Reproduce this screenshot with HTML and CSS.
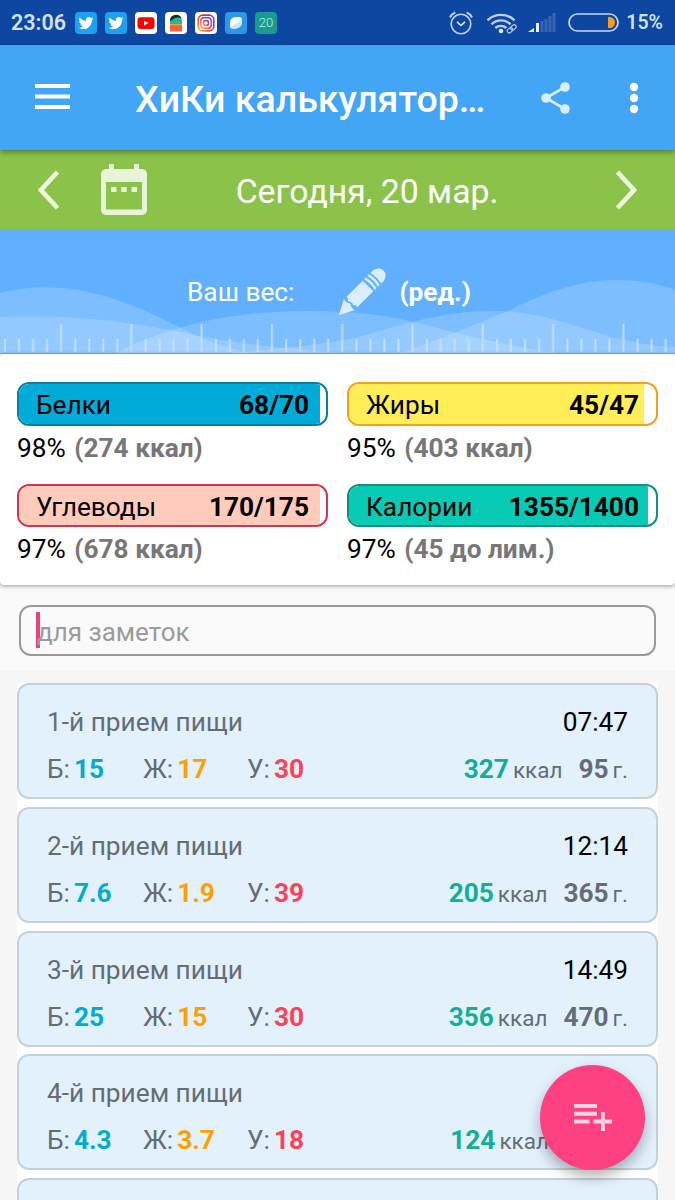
FILE: index.html
```html
<!DOCTYPE html>
<html lang="ru">
<head>
  <meta charset="UTF-8">
  <title>ХиКи калькулятор</title>
  <link rel="stylesheet" href="styles.css">
</head>
<body>
  <div class="status-bar">
    <span class="clock">23:06</span>
    <div class="notifications">
      <svg class="app-icon" viewBox="0 0 22 22"><rect width="22" height="22" rx="4" fill="#1da1f2"/><path transform="translate(3.6 3.6) scale(.62)" fill="#fff" d="M23.95 4.57a10 10 0 0 1-2.82.77 4.96 4.96 0 0 0 2.16-2.72c-.95.55-2 .96-3.13 1.18a4.92 4.92 0 0 0-8.38 4.48C7.69 8.1 4.07 6.13 1.64 3.16a4.92 4.92 0 0 0 1.52 6.57 4.9 4.9 0 0 1-2.23-.61v.06a4.92 4.92 0 0 0 3.95 4.83 5 5 0 0 1-2.21.08 4.94 4.94 0 0 0 4.6 3.42A9.87 9.87 0 0 1 0 19.54a14 14 0 0 0 7.55 2.21c9.05 0 14-7.5 14-13.98 0-.21 0-.42-.02-.63a9.94 9.94 0 0 0 2.42-2.57z"/></svg>
      <svg class="app-icon" viewBox="0 0 22 22"><rect width="22" height="22" rx="4" fill="#1da1f2"/><path transform="translate(3.6 3.6) scale(.62)" fill="#fff" d="M23.95 4.57a10 10 0 0 1-2.82.77 4.96 4.96 0 0 0 2.16-2.72c-.95.55-2 .96-3.13 1.18a4.92 4.92 0 0 0-8.38 4.48C7.69 8.1 4.07 6.13 1.64 3.16a4.92 4.92 0 0 0 1.52 6.57 4.9 4.9 0 0 1-2.23-.61v.06a4.92 4.92 0 0 0 3.95 4.83 5 5 0 0 1-2.21.08 4.94 4.94 0 0 0 4.6 3.42A9.87 9.87 0 0 1 0 19.54a14 14 0 0 0 7.55 2.21c9.05 0 14-7.5 14-13.98 0-.21 0-.42-.02-.63a9.94 9.94 0 0 0 2.42-2.57z"/></svg>
      <svg class="app-icon" viewBox="0 0 22 22"><rect width="22" height="22" rx="4" fill="#fff"/><rect x="2.5" y="5.3" width="17" height="11.7" rx="3" fill="#f00"/><path d="M9 8.8l4.5 2.3L9 13.4z" fill="#fff"/></svg>
      <svg class="app-icon" viewBox="0 0 22 22"><rect width="22" height="22" rx="4" fill="#fff"/><path d="M5 13V9a6 6 0 0 1 12 0v4z" fill="#2fb491"/><path d="M5 9a6 6 0 0 1 11.500-2.500Q12 4.500 9 6.500 7 8 5 9z" fill="#0b2a2c"/><path d="M5 12.5h12v7H5z" fill="#f4613c"/><path d="M5 12h12v1.3H5z" fill="#e8a24c"/></svg>
      <svg class="app-icon" viewBox="0 0 22 22">
        <defs>
          <linearGradient id="insta" x1="0" y1="1" x2="1" y2="0">
            <stop offset="0" stop-color="#fdb53c"/>
            <stop offset=".45" stop-color="#e4364f"/>
            <stop offset="1" stop-color="#7b3fc4"/>
          </linearGradient>
        </defs>
        <rect width="22" height="22" rx="4" fill="#fff"/>
        <rect x="3.200" y="3.200" width="15.600" height="15.600" rx="4.500" fill="none" stroke="url(#insta)" stroke-width="1.700"/>
        <rect x="5.800" y="5.800" width="10.400" height="10.400" rx="3" fill="none" stroke="url(#insta)" stroke-width="1.400"/>
        <circle cx="11" cy="11" r="2.500" fill="none" stroke="url(#insta)" stroke-width="1.500"/>
      </svg>
      <svg class="app-icon" viewBox="0 0 22 22"><rect width="22" height="22" rx="4" fill="#2c98ec"/><path d="M10 5h4.500Q17 5 17 7.500V10a7 7 0 0 1-6 6.500H7.500Q5 16.500 5 14v-3.500A5.500 5.500 0 0 1 10 5z" fill="#fff"/><path d="M17 7.500V10a7 7 0 0 1-6 6.500H7.500q-1.500 0-2.200-1.200z" fill="#cfe5fa"/></svg>
      <span class="app-count">20</span>
    </div>
    <div class="system">
      <svg class="alarm" viewBox="0 0 24 24" fill="none" stroke="#bcd0f2" stroke-width="1.6"><circle cx="12" cy="13" r="9.8"/><path d="M1 6.5Q2.500 3 6.300 1.500M23 6.500Q21.500 3 17.700 1.500" stroke-width="2"/><path d="M8 10.800l4 3.700 4-3.700" stroke="#e2edff"/></svg>
      <svg class="wifi" viewBox="0 0 32 22" fill="none" stroke="#bcd0f2" stroke-width="2.4"><path d="M1.500 8.300a19.500 19.500 0 0 1 27 0M5.500 12.300a13.500 13.500 0 0 1 19 0M9.300 16a8.200 8.200 0 0 1 11 0"/><circle cx="15" cy="19" r="2.3" fill="#e2edff" stroke="none"/><g transform="rotate(-40 25.5 17)" stroke-width="1.100"><rect x="20.5" y="15" width="6" height="4" rx="2"/><rect x="25" y="15" width="6" height="4" rx="2"/></g></svg>
      <svg class="signal" viewBox="0 0 28 20"><path d="M0 19l6-4v4z M8 10h3v9H8z" fill="#e4edfb"/><path d="M12.500 8h3v11h-3z M16.500 6h3v13h-3z M20.500 3h3v16h-3z M24.500 0h3v19h-3z" fill="#3864b0"/></svg>
      <svg class="battery" viewBox="0 0 52 20"><rect x="1" y="1" width="49" height="17" rx="8.5" fill="none" stroke="#c4d6f3" stroke-width="1.7"/><path d="M40 4h1.500a5.500 5.500 0 0 1 0 11H40z" fill="#fb9a21"/></svg>
      <span class="percent">15%</span>
    </div>
  </div>

  <div class="app-bar">
    <svg class="menu-icon" viewBox="0 0 35 25"><path d="M0 0h35v4H0z M0 10.500h35v4H0z M0 21h35v4H0z" fill="#fff"/></svg>
    <h1 class="title">ХиКи калькулятор…</h1>
    <svg class="share-icon" viewBox="0 0 30 32" fill="#d9edff"><circle cx="5" cy="16" r="4.8"/><circle cx="24" cy="5" r="4.8"/><circle cx="24" cy="27" r="4.8"/><path d="M24 5L5 16l19 11" fill="none" stroke="#d9edff" stroke-width="2.6"/></svg>
    <svg class="more-icon" viewBox="0 0 10 32" fill="#fff"><circle cx="5" cy="5" r="4.2"/><circle cx="5" cy="16" r="4.2"/><circle cx="5" cy="27" r="4.2"/></svg>
  </div>

  <div class="date-bar">
    <svg class="arrow" viewBox="0 0 22 40"><path d="M19.500 2L3 20l16.500 18" fill="none" stroke="#eef7df" stroke-width="4.6"/></svg>
    <svg class="calendar" viewBox="0 0 46 51" fill="#e8f4d9"><path fill-rule="evenodd" d="M8 0h5v5h20V0h5v5h3a5 5 0 0 1 5 5v36a5 5 0 0 1-5 5H5a5 5 0 0 1-5-5V10a5 5 0 0 1 5-5h3z M5 18v27.500h36V18z"/><path d="M10 23h5.500v5H10z M20.200 23h5.500v5h-5.500z M30.500 23H36v5h-5.500z"/></svg>
    <span class="date">Сегодня, 20 мар.</span>
    <svg class="arrow" viewBox="0 0 22 40"><path d="M2.500 2L19 20 2.500 38" fill="none" stroke="#eef7df" stroke-width="4.6"/></svg>
  </div>

  <div class="weight">
    <!-- волны и линейка -->
    <svg class="waves" viewBox="0 0 675 125">
      <defs>
        <pattern id="ruler" x="0" y="0" width="70.3" height="125" patternUnits="userSpaceOnUse">
          <path d="M5 111v13M19 111v13M33 111v13M47 111v13M61 96v28" stroke="#c5e2ff" stroke-width="1.8"/>
        </pattern>
      </defs>
      <g fill="#fff" fill-opacity=".18">
        <path d="M0 65C60 50 115 65 187 103S310 122 360 125H0z"/>
        <path d="M0 89C90 85 160 100 200 108S300 122 340 125H0z"/>
        <path d="M115 125C160 103 220 83 305 83S410 94 470 108 540 123 560 125z"/>
        <path d="M230 125C290 120 320 116 345 112S430 83 490 83 590 105 624 112 660 118 675 119V125z"/>
        <path d="M400 125C450 108 485 92 510 82 560 57 590 52 617 52 640 52 660 56 675 62V125z"/>
      </g>
      <rect width="675" height="125" fill="url(#ruler)"/>
    </svg>
    <div class="weight-row">
      <span>Ваш вес:</span>
      <svg class="pencil" viewBox="0 0 48 48" fill="#dcedff"><g transform="translate(1 47) rotate(-45)"><path d="M0 0l15-8q-2 4 1 8-3 4-1 8z"/><path d="M18-7.500h23v15H18q2-3-1-4 2-3.500-1-7 3-1.500 2-4z"/><path d="M43-7.500h2.500q2 7.500 0 15H43q2-7.500 0-15z M47.500-7.500H50q2 7.500 0 15h-2.500q2-7.500 0-15z"/><path d="M52-7.500h4q7 2 7 7.500t-7 7.500h-4q2-7.500 0-15z"/></g></svg>
      <b>(ред.)</b>
    </div>
  </div>

  <div class="summary">
    <div class="nutrient">
      <div class="bar protein"><div class="fill" style="width: 98%"></div><span>Белки</span><b>68/70</b></div>
      <p>98% <b>(274 ккал)</b></p>
    </div>
    <div class="nutrient">
      <div class="bar fat"><div class="fill" style="width: 96%"></div><span>Жиры</span><b>45/47</b></div>
      <p>95% <b>(403 ккал)</b></p>
    </div>
    <div class="nutrient">
      <div class="bar carbs"><div class="fill" style="width: 98%"></div><span>Углеводы</span><b>170/175</b></div>
      <p>97% <b>(678 ккал)</b></p>
    </div>
    <div class="nutrient">
      <div class="bar calories"><div class="fill" style="width: 97.5%"></div><span>Калории</span><b>1355/1400</b></div>
      <p>97% <b>(45 до лим.)</b></p>
    </div>
  </div>

  <div class="notes">
    <div class="note-input"><span class="caret"></span>для заметок</div>
  </div>

  <div class="meals">
    <div class="meal">
      <div class="meal-head"><span>1-й прием пищи</span><span class="time">07:47</span></div>
      <div class="meal-info">
        <span>Б:<b class="b">15</b></span><span>Ж:<b class="j">17</b></span><span>У:<b class="u">30</b></span>
        <span class="total"><b class="kcal">327</b><small>ккал</small><b class="gram">95</b><small>г.</small></span>
      </div>
    </div>
    <div class="meal">
      <div class="meal-head"><span>2-й прием пищи</span><span class="time">12:14</span></div>
      <div class="meal-info">
        <span>Б:<b class="b">7.6</b></span><span>Ж:<b class="j">1.9</b></span><span>У:<b class="u">39</b></span>
        <span class="total"><b class="kcal">205</b><small>ккал</small><b class="gram">365</b><small>г.</small></span>
      </div>
    </div>
    <div class="meal">
      <div class="meal-head"><span>3-й прием пищи</span><span class="time">14:49</span></div>
      <div class="meal-info">
        <span>Б:<b class="b">25</b></span><span>Ж:<b class="j">15</b></span><span>У:<b class="u">30</b></span>
        <span class="total"><b class="kcal">356</b><small>ккал</small><b class="gram">470</b><small>г.</small></span>
      </div>
    </div>
    <div class="meal">
      <div class="meal-head"><span>4-й прием пищи</span></div>
      <div class="meal-info">
        <span>Б:<b class="b">4.3</b></span><span>Ж:<b class="j">3.7</b></span><span>У:<b class="u">18</b></span>
        <span class="total cut"><b class="kcal">124</b><small>ккал</small></span>
      </div>
    </div>
    <div class="meal next"></div>
  </div>

  <div class="add-btn">
    <svg viewBox="0 0 38 28" fill="#ffd3e2"><path d="M0 0h23v4H0z M0 7.800h23v4H0z M0 15.500h15.500v4H0z M27 8h3.800v7.500H38v4h-7.200V27H27v-7.500h-7.500v-4H27z"/></svg>
  </div>
</body>
</html>
```
FILE: styles.css
```css
* {
  box-sizing: border-box;
}
body {
  margin: 0;
  height: 1200px;
  overflow: hidden;
  position: relative;
  background: #f6f6f6;
  font-family: Roboto, "Noto Sans", sans-serif;
  font-size: 26.25px;
  color: #000;
}
svg {
  display: block;
  flex: none;
}
.status-bar {
  height: 45px;
  padding: 0 12px 0 11px;
  display: flex;
  align-items: center;
  background: #0d47a1;
  color: #d3e2fb;
  font-weight: 500;
}
.clock {
  width: 64px;
  font-size: 21.5px;
  font-weight: 600;
  line-height: 46px;
}
.notifications {
  display: flex;
  gap: 8px;
}
.app-icon {
  width: 22px;
  height: 22px;
}
.app-count {
  width: 22px;
  height: 22px;
  border-radius: 4px;
  background: #169d8f;
  color: #c5ebe5;
  font-size: 13px;
  font-weight: 300;
  line-height: 22px;
  text-align: center;
}
.system {
  margin-left: auto;
  display: flex;
  align-items: center;
}
.alarm {
  width: 24px;
  height: 24px;
  margin-right: 13px;
}
.wifi {
  width: 32px;
  height: 22px;
  margin-right: 10px;
}
.signal {
  width: 28px;
  height: 20px;
  margin-right: 12px;
}
.battery {
  width: 52px;
  height: 20px;
  margin-right: 6px;
}
.percent {
  font-size: 19.5px;
  font-weight: 600;
}
.app-bar {
  height: 105px;
  padding: 0 36px 0 35px;
  display: flex;
  align-items: center;
  background: #42a5f5;
  color: #fff;
  position: relative;
  box-shadow: 0 2px 6px rgba(0, 0, 0, 0.4);
  z-index: 1;
}
.menu-icon {
  width: 35px;
  height: 25px;
  margin-bottom: 2px;
}
.title {
  margin: 2px 0 0 65px;
  flex: 1;
  font-size: 37.5px;
  font-weight: 500;
  white-space: nowrap;
}
.share-icon {
  width: 30px;
  height: 32px;
  margin-right: 58px;
}
.more-icon {
  width: 10px;
  height: 32px;
}
.date-bar {
  height: 79px;
  padding: 0 38px;
  display: flex;
  align-items: center;
  background: #8bc34a;
  color: #fff;
}
.arrow {
  width: 22px;
  height: 40px;
}
.calendar {
  width: 46px;
  height: 51px;
  margin-left: 41px;
}
.date {
  flex: 1;
  padding-right: 28px;
  padding-top: 3px;
  font-size: 33.75px;
  text-align: center;
}
.weight {
  height: 125px;
  position: relative;
  background: #60b0ff;
  border-bottom: 1px solid #78aee8;
  color: #fff;
}
.waves {
  position: absolute;
  top: -1px;
  left: 0;
  width: 675px;
  height: 125px;
}
.weight-row {
  position: relative;
  display: flex;
  align-items: center;
  padding: 39px 0 0 187px;
}
.pencil {
  width: 48px;
  height: 48px;
  margin: 0 13px 0 44px;
}
.summary {
  height: 231px;
  padding: 28px 17px 0;
  display: grid;
  grid-template-columns: 1fr 1fr;
  grid-auto-rows: 101.5px;
  column-gap: 19px;
  background: #fff;
  border-radius: 4px;
  position: relative;
  box-shadow: 0 1px 4px rgba(0, 0, 0, 0.4);
}
.bar {
  height: 43.5px;
  padding: 3px 17px 0;
  display: flex;
  align-items: center;
  justify-content: space-between;
  position: relative;
  overflow: hidden;
  border: 2px solid;
  border-radius: 12px;
}
.fill {
  position: absolute;
  top: 0;
  left: 0;
  bottom: 0;
}
.bar span, .bar b {
  position: relative;
}
.protein {
  border-color: #0c7f9e;
}
.protein .fill {
  background: #00acd7;
}
.fat {
  border-color: #f59f1b;
}
.fat .fill {
  background: #ffee58;
}
.carbs {
  border-color: #d23550;
}
.carbs .fill {
  background: #ffccbc;
}
.calories {
  border-color: #128f80;
}
.calories .fill {
  background: #09cab5;
}
.nutrient p {
  margin: 7px 0 0;
  line-height: 31px;
}
.nutrient p b {
  margin-left: 2px;
  color: #777;
}
.notes {
  height: 86px;
  padding: 20px 19px 0;
  background: #fafafa;
}
.note-input {
  height: 51px;
  padding: 2px 0 0 15px;
  display: flex;
  align-items: center;
  border: 2px solid #9a9a9a;
  border-radius: 12px;
  color: #9b9b9b;
  font-size: 26px;
}
.caret {
  width: 4px;
  height: 36px;
  margin: -3px -3px 0 0;
  background: #ec407a;
}
.meals {
  height: 517px;
  margin: 12px 17px 0;
  overflow: hidden;
  background: #fff;
}
.meal {
  height: 116px;
  margin-bottom: 7.75px;
  padding: 21px 28px 0;
  background: #e3f1fd;
  border: 2px solid #c6d0d9;
  border-radius: 12px;
  color: #646d75;
}
.meal.next {
  height: 22px;
  margin-bottom: 0;
  border-bottom: none;
  border-radius: 12px 12px 0 0;
}
.meal-head {
  display: flex;
  justify-content: space-between;
  line-height: 32px;
}
.time {
  color: #000;
}
.meal-info {
  margin-top: 15px;
  display: grid;
  grid-template-columns: 96px 104px 104px 1fr;
  line-height: 32px;
}
.meal-info b {
  margin-left: 4px;
}
.meal-info small {
  margin-left: 4px;
  font-size: 22.5px;
}
.total {
  text-align: right;
  white-space: nowrap;
}
.total.cut {
  padding-right: 79px;
}
.b {
  color: #00acd0;
}
.j {
  color: #ffa000;
}
.u {
  color: #ff4057;
}
.kcal {
  color: #12ae98;
}
.meal-info .gram {
  margin-left: 16px;
}
.add-btn {
  position: absolute;
  top: 1065px;
  left: 540px;
  width: 105px;
  height: 105px;
  display: flex;
  align-items: center;
  justify-content: center;
  border-radius: 50%;
  background: #ff4081;
  box-shadow: 0 7px 14px rgba(0, 0, 0, 0.3);
}
.add-btn svg {
  width: 38px;
  height: 28px;
}
```
